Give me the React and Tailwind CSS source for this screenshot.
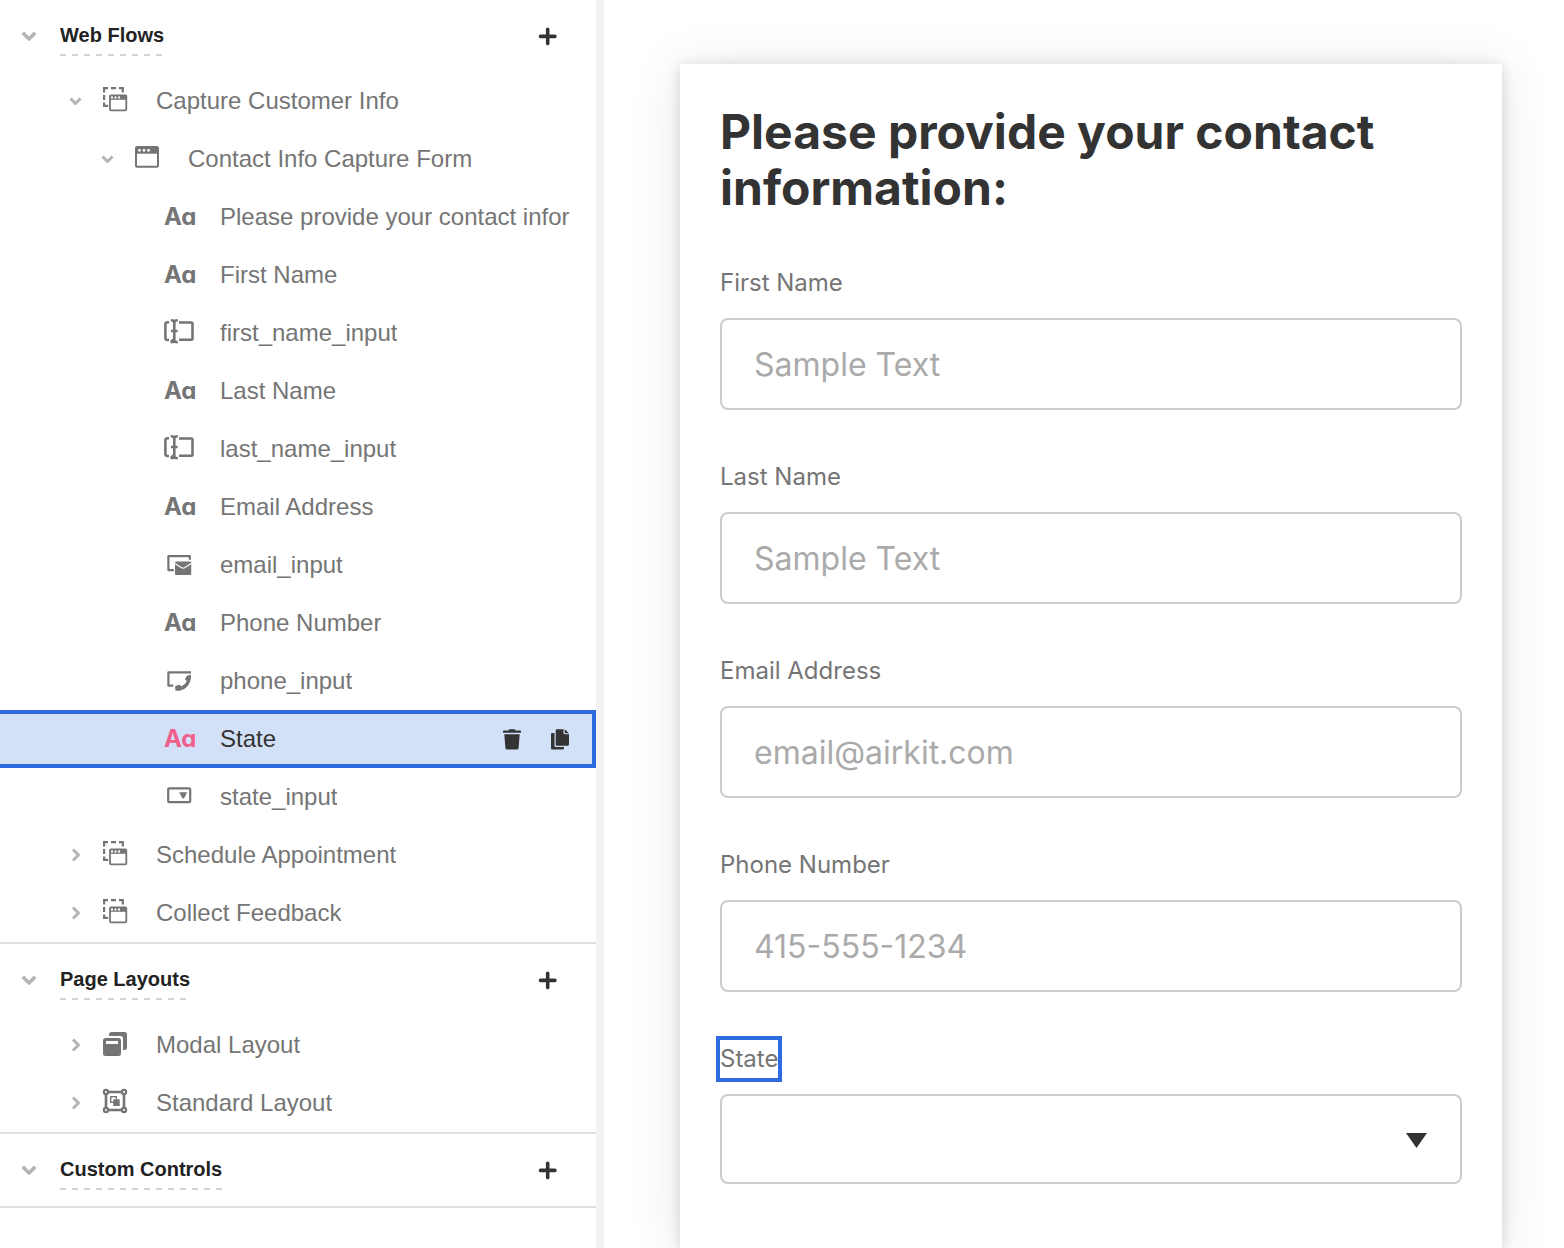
import { useState } from 'react';
import clsx from 'clsx';

const ICON_CLASS = 'w-8 h-8 flex-shrink-0';

function TextIcon() {
  return (
    <span
      aria-hidden="true"
      className="w-8 flex-shrink-0 font-['Inter',sans-serif] text-2xl font-bold [font-feature-settings:'cv11']"
    >
      Aa
    </span>
  );
}

function FlowIcon() {
  return (
    <svg viewBox="0 0 32 32" className={ICON_CLASS} fill="none" stroke="currentColor" strokeWidth="2.2">
      <path d="M3 3.1h5M11 3.1h5M19 3.1h3.800v4.400M4.100 2v5.500M4.100 10v5M4.100 17.500v3.400h4" />
      <rect x="10" y="10.3" width="16.3" height="15" rx="1" strokeWidth="1.8" />
      <path d="M10 10.3h16.3v4.5H10z" fill="currentColor" stroke="none" />
      <g fill="#fff" stroke="none">
        <rect x="11" y="11.5" width="2" height="2" />
        <rect x="14.5" y="11.5" width="2" height="2" />
        <rect x="18" y="11.5" width="2" height="2" />
      </g>
    </svg>
  );
}

function WindowIcon() {
  return (
    <svg viewBox="0 0 32 32" className={ICON_CLASS} fill="none" stroke="currentColor" strokeWidth="2">
      <rect x="4" y="4" width="22" height="19.7" rx="1" />
      <path d="M4 4h22v6.7H4z" fill="currentColor" stroke="none" />
      <g fill="#fff" stroke="none">
        <circle cx="7.4" cy="7.3" r="1.4" />
        <circle cx="12" cy="7.3" r="1.4" />
        <circle cx="16.6" cy="7.3" r="1.4" />
      </g>
    </svg>
  );
}

function InputIcon() {
  return (
    <svg viewBox="0 0 32 32" className={ICON_CLASS} fill="none" stroke="currentColor" strokeWidth="2.6">
      <path d="M5 5.3H3.5Q1.4 5.3 1.4 7.5v13.3q0 2.2 2.1 2.2H5" />
      <path d="M15 5.5h12.3q1.2 0 1.2 1.2v14.8q0 1.2-1.2 1.2H15" />
      <path d="M6.8 3.2q3.5 0 3.5 2v18q0-2-3.5 2M13.8 3.2q-3.5 0-3.5 2M6.8 25.2q3.5 0 3.5-2 0 2 3.5 2M7 14h6.6" />
    </svg>
  );
}

function EmailIcon() {
  return (
    <svg viewBox="0 0 32 32" className={ICON_CLASS} fill="none" stroke="currentColor" strokeWidth="2.2">
      <path d="M9.8 21.2H4.4V7.2H25.8v3.6" strokeLinejoin="round" />
      <rect x="11" y="12.5" width="16.2" height="13.5" rx="1.2" fill="currentColor" stroke="none" />
      <path d="M11 14.5l6.6 4.3q1.5.8 3 0l6.6-4.3" stroke="#fff" strokeWidth="1.2" />
    </svg>
  );
}

function PhoneIcon() {
  return (
    <svg viewBox="0 0 32 32" className={ICON_CLASS} fill="none" stroke="currentColor" strokeWidth="2.2">
      <path d="M9.2 20.6H4.4V7.4H27" strokeLinejoin="round" />
      <path
        d="M22.6 10.9l3.5-1.1q.9-.1 1 .9Q27 18.3 22.2 22.4 18 26 12.4 25.8q-.8-.1-1-.9l-.3-2.8q0-.7.6-1l3.3-1.3q.7-.1 1.1.3l1.1 1.4q4-1.7 5.7-5.4l-1.5-1.2q-.4-.4-.3-1z"
        fill="currentColor"
        stroke="none"
      />
    </svg>
  );
}

function SelectIcon() {
  return (
    <svg viewBox="0 0 32 32" className={ICON_CLASS} fill="none" stroke="currentColor" strokeWidth="2.2">
      <rect x="4.2" y="7.4" width="22" height="13.8" rx="1" />
      <path d="M15.2 11.2h8l-3 5.8q-1 1.2-2 0z" fill="currentColor" stroke="none" />
    </svg>
  );
}

function ModalIcon() {
  return (
    <svg viewBox="0 0 32 32" className={ICON_CLASS} fill="currentColor">
      <path d="M9 7V5.5Q9 3 11.5 3h13Q27 3 27 5.5v13q0 2.5-2.5 2.5H23V9.5Q23 7 20.5 7z" />
      <path
        fillRule="evenodd"
        d="M5.5 9h13Q21 9 21 11.5v13q0 2.5-2.5 2.5h-13Q3 27 3 24.5v-13Q3 9 5.5 9zM6 12v3h12v-3z"
      />
    </svg>
  );
}

function LayoutIcon() {
  return (
    <svg viewBox="0 0 32 32" className={ICON_CLASS} fill="none" stroke="currentColor" strokeWidth="2.2">
      <path d="M8 5h14M8 23h14M6 7v14M24 7v14" strokeWidth="2.6" />
      <circle cx="6" cy="5" r="2.1" />
      <circle cx="24" cy="5" r="2.1" />
      <circle cx="6" cy="23" r="2.1" />
      <circle cx="24" cy="23" r="2.1" />
      <rect x="10.7" y="9.7" width="5.6" height="5.6" strokeWidth="1.4" />
      <path d="M13.3 12.3h6.4V19h-6.4z" fill="currentColor" stroke="none" />
    </svg>
  );
}

const ICONS = {
  text: TextIcon,
  flow: FlowIcon,
  window: WindowIcon,
  input: InputIcon,
  email: EmailIcon,
  phone: PhoneIcon,
  select: SelectIcon,
  modal: ModalIcon,
  layout: LayoutIcon,
};

const INDENT = ['pl-16', 'pl-24', 'pl-32'];

const SECTIONS = [
  {
    title: 'Web Flows',
    rows: [
      { label: 'Capture Customer Info', icon: 'flow', depth: 0, open: true },
      { label: 'Contact Info Capture Form', icon: 'window', depth: 1, open: true },
      { label: 'Please provide your contact infor', icon: 'text', depth: 2 },
      { label: 'First Name', icon: 'text', depth: 2 },
      { label: 'first_name_input', icon: 'input', depth: 2 },
      { label: 'Last Name', icon: 'text', depth: 2 },
      { label: 'last_name_input', icon: 'input', depth: 2 },
      { label: 'Email Address', icon: 'text', depth: 2 },
      { label: 'email_input', icon: 'email', depth: 2 },
      { label: 'Phone Number', icon: 'text', depth: 2 },
      { label: 'phone_input', icon: 'phone', depth: 2 },
      { label: 'State', icon: 'text', depth: 2 },
      { label: 'state_input', icon: 'select', depth: 2 },
      { label: 'Schedule Appointment', icon: 'flow', depth: 0, open: false },
      { label: 'Collect Feedback', icon: 'flow', depth: 0, open: false },
    ],
  },
  {
    title: 'Page Layouts',
    rows: [
      { label: 'Modal Layout', icon: 'modal', depth: 0, open: false },
      { label: 'Standard Layout', icon: 'layout', depth: 0, open: false },
    ],
  },
  { title: 'Custom Controls', rows: [] },
];

const FIELDS = [
  { id: 'first-name', label: 'First Name', type: 'text', placeholder: 'Sample Text' },
  { id: 'last-name', label: 'Last Name', type: 'text', placeholder: 'Sample Text' },
  { id: 'email', label: 'Email Address', type: 'email', placeholder: 'email@airkit.com' },
  { id: 'phone', label: 'Phone Number', type: 'tel', placeholder: '415-555-1234' },
];

function Chevron({ open }) {
  return (
    <svg viewBox="0 0 24 24" className="w-6 h-6" fill="none" stroke="currentColor" strokeWidth="3" strokeLinejoin="round">
      <path d={open ? 'M6.5 9.5l5 5 5-5' : 'M9 6.5l5.500 5.500L9 17.500'} />
    </svg>
  );
}

function TreeRow({ row, selected, onSelect }) {
  const Icon = ICONS[row.icon];
  const hasChildren = row.open !== undefined;

  return (
    <li
      className={clsx(
        'flex items-center h-[58px]',
        INDENT[row.depth],
        selected ? 'bg-[#d3e1f8] border-y-4 border-r-4 border-[#2f6be0] pr-4' : 'pr-5'
      )}
    >
      {hasChildren ? (
        <button type="button" aria-label={`Toggle ${row.label}`} aria-expanded={row.open} className="w-6 flex-shrink-0 text-[#b4b4b4]">
          <Chevron open={row.open} />
        </button>
      ) : (
        <span className="w-6 flex-shrink-0" />
      )}
      <button type="button" onClick={onSelect} className="flex items-center flex-1 min-w-0 pl-3 gap-6 text-left">
        <span className={clsx('flex flex-shrink-0', selected ? 'text-[#f0608a]' : 'text-[#757575]')}>
          <Icon />
        </span>
        <span className={clsx('text-2xl whitespace-nowrap overflow-hidden', selected ? 'text-[#333]' : 'text-[#757575]')}>
          {row.label}
        </span>
      </button>
      {selected && (
        <div className="flex gap-4 text-[#333]">
          <button type="button" aria-label="Delete">
            <svg viewBox="0 0 32 32" className="w-8 h-8" fill="currentColor">
              <path d="M7 8.2q0-.8.8-.8h4.7q.5-1.2 1.5-1.2h4q1 0 1.5 1.2h4.7q.8 0 .8.8v1.6H7zM8.3 11.2h15.400L22.600 25q-.1 1.500-1.600 1.500H11q-1.500 0-1.600-1.500z" />
            </svg>
          </button>
          <button type="button" aria-label="Duplicate">
            <svg viewBox="0 0 32 32" className="w-8 h-8" fill="currentColor">
              <path d="M13 6.2h6.5v3.6q0 1.5 1.5 1.5h4v10.200q0 1.300-1.300 1.300H13q-1.300 0-1.300-1.300V7.500q0-1.300 1.300-1.300zM20.700 6.200l4.300 4H21.500q-.8 0-.8-.8z" />
              <path d="M10.500 10H8.300Q7 10 7 11.300v13.900q0 1.300 1.300 1.300h10.400q1.300 0 1.300-1.300v-1.200h-8q-1.500 0-1.500-1.500z" />
            </svg>
          </button>
        </div>
      )}
    </li>
  );
}

export default function App() {
  const [selected, setSelected] = useState('State');

  return (
    <div className="flex min-h-screen bg-white font-['Liberation_Sans',Arial,sans-serif]">
      {/* Project tree */}
      <nav className="w-[604px] flex-shrink-0 border-r-8 border-[#f3f3f3]">
        {SECTIONS.map((section) => (
          <section key={section.title} className="border-b-2 border-[#e2e2e2]">
            <div className="flex items-center h-[72px] pl-4 pr-8">
              <button type="button" aria-label={`Toggle ${section.title}`} className="text-[#b4b4b4]">
                <svg viewBox="0 0 28 28" className="w-7 h-7" fill="none" stroke="currentColor" strokeWidth="3.6" strokeLinejoin="round">
                  <path d="M6.8 10.8l6.2 6.2 6.2-6.2" />
                </svg>
              </button>
              <div className="ml-4">
                <h2 className="py-[7px] text-xl leading-6 font-bold text-[#222]">{section.title}</h2>
                <div className="h-[2px] bg-[repeating-linear-gradient(to_right,#d4d4d4_0_6px,transparent_6px_12px)]" />
              </div>
              <button type="button" aria-label={`Add to ${section.title}`} className="ml-auto text-[#333]">
                <svg viewBox="0 0 32 32" className="w-8 h-8" fill="none" stroke="currentColor" strokeWidth="3.6" strokeLinecap="round">
                  <path d="M15.7 9.2v14.4M8.5 16.4h14.4" />
                </svg>
              </button>
            </div>
            <ul>
              {section.rows.map((row) => (
                <TreeRow
                  key={row.label}
                  row={row}
                  selected={selected === row.label}
                  onSelect={() => setSelected(row.label)}
                />
              ))}
            </ul>
          </section>
        ))}
      </nav>

      {/* Page preview */}
      <main className="flex flex-1 min-w-0 pt-16 pl-[76px] pr-[62px] overflow-hidden font-['Inter',sans-serif]">
        <form className="flex-1 min-w-0 p-10 bg-white shadow-[0_4px_50px_rgba(0,0,0,0.1),0_2px_12px_rgba(0,0,0,0.14)]">
          <h1 className="text-5xl leading-[56px] font-bold text-[#333]">Please provide your contact information:</h1>

          <div className="mt-12 space-y-12">
            {FIELDS.map((field) => (
              <div key={field.id}>
                <label htmlFor={field.id} className="block text-2xl leading-[38px] text-[#757575]">
                  {field.label}
                </label>
                <input
                  id={field.id}
                  type={field.type}
                  placeholder={field.placeholder}
                  className="block w-full h-[92px] mt-4 px-8 border-2 border-[#ccc] rounded-lg text-[32px] text-[#333] placeholder:text-[#aaa] focus:outline-none"
                />
              </div>
            ))}

            <div>
              <label
                htmlFor="state"
                className="block w-fit text-2xl leading-[38px] text-[#757575] outline-4 outline-[#2f6be0]"
              >
                State
              </label>
              <div className="relative mt-4">
                <select
                  id="state"
                  className="block w-full h-[90px] px-8 border-2 border-[#ccc] rounded-lg text-[32px] text-[#333] bg-white appearance-none focus:outline-none"
                >
                  <option value=""></option>
                </select>
                <svg
                  viewBox="0 0 21 15"
                  className="absolute right-[35px] top-[39px] w-[21px] h-[15px] pointer-events-none"
                  fill="#333"
                >
                  <path d="M0 0h21L10.5 15z" />
                </svg>
              </div>
            </div>
          </div>
        </form>
      </main>
    </div>
  );
}
